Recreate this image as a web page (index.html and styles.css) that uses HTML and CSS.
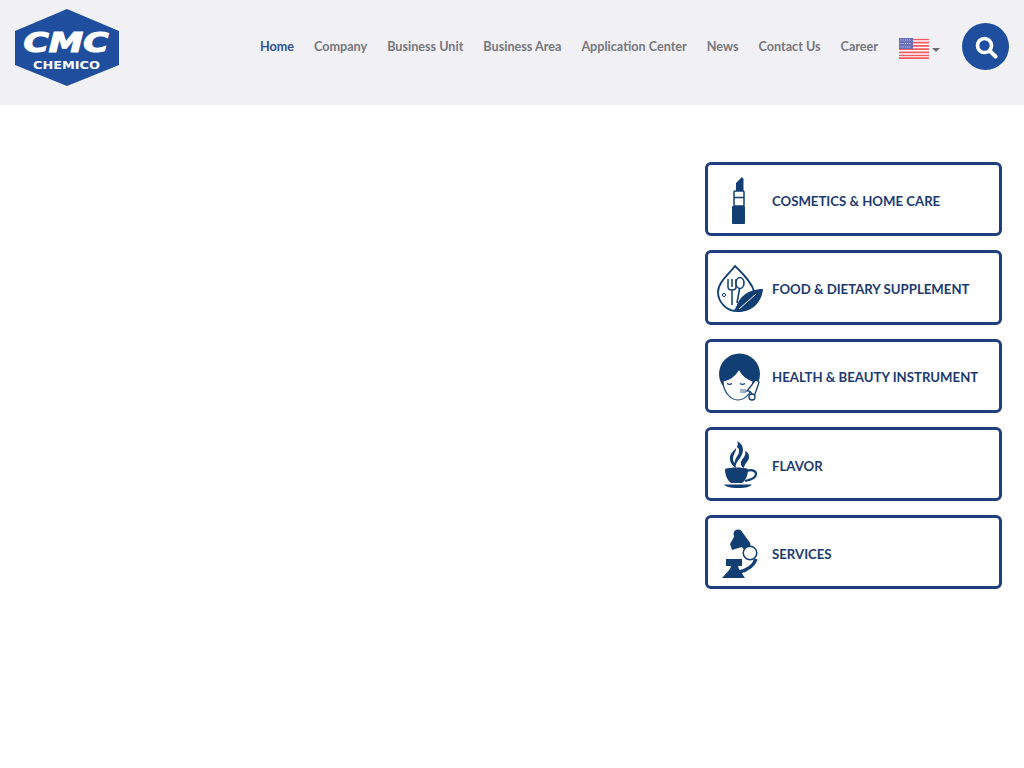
FILE: index.html
```html
<!DOCTYPE html>
<html lang="en">
<head>
    <meta charset="UTF-8">
    <meta name="viewport" content="width=device-width, initial-scale=1.0">
    <title>CMC Chemico</title>
    <link rel="stylesheet" href="styles.css">
</head>
<body>
    <header class="site-header">
        <a class="logo" href="#">
            <svg width="104" height="77" viewBox="0 0 104 77">
                <polygon points="52,0 104,22 104,56 52,77 0,56 0,22" fill="#1f4e9e"/>
                <text class="logo-mark" x="51" y="43" text-anchor="middle" textLength="85" lengthAdjust="spacingAndGlyphs">CMC</text>
                <text class="logo-name" x="51.500" y="60" text-anchor="middle" textLength="67" lengthAdjust="spacingAndGlyphs">CHEMICO</text>
            </svg>
        </a>
        <nav class="main-nav">
            <a class="active" href="#">Home</a>
            <a href="#">Company</a>
            <a href="#">Business Unit</a>
            <a href="#">Business Area</a>
            <a href="#">Application Center</a>
            <a href="#">News</a>
            <a href="#">Contact Us</a>
            <a href="#">Career</a>
        </nav>
        <a class="lang" href="#">
            <svg width="30" height="21" viewBox="0 0 30 21">
                <rect width="30" height="21" fill="#fff"/>
                <path d="M0 1.500h30M0 4.700h30M0 7.900h30M0 11.100h30M0 14.300h30M0 17.500h30M0 20.200h30" stroke="#ee5a64" stroke-width="1.700"/>
                <rect width="14" height="11" fill="#6a6fb8"/>
                <path d="M1.500 2h11M1.500 5.500h11M1.500 9h11" stroke="#d5d7f0" stroke-width="1" stroke-dasharray="1 1.200"/>
            </svg>
            <span class="caret"></span>
        </a>
        <a class="search-btn" href="#">
            <svg width="24" height="24" viewBox="0 0 24 24">
                <circle cx="10.500" cy="10.500" r="7" fill="none" stroke="#fff" stroke-width="3.600"/>
                <path d="M15.800 15.800 21.500 21.500" stroke="#fff" stroke-width="4" stroke-linecap="round"/>
            </svg>
        </a>
    </header>

    <main class="content">
        <aside class="side-links">
            <a class="side-card" href="#">
                <svg class="side-icon" viewBox="0 0 50 62">
                    <path d="M22 23V15l6-6 1.500 2V23z" fill="#123f73"/>
                    <rect x="20" y="23" width="10" height="15" rx="1" fill="#fff" stroke="#123f73" stroke-width="1.500"/>
                    <path d="M20 29.500h10" stroke="#123f73" stroke-width="1.500"/>
                    <rect x="18" y="38" width="13" height="18" rx="1" fill="#123f73"/>
                </svg>
                <span>COSMETICS &amp; HOME CARE</span>
            </a>
            <a class="side-card" href="#">
                <svg class="side-icon" viewBox="0 0 50 62">
                    <path d="M21 10C15 18 4 26 4 36c0 10 8 18 17 19 4-8 8-15 19-20-3-10-12-18-19-25z" fill="#fff" stroke="#123f73" stroke-width="1.800"/>
                    <path d="M14 23v8c0 2 2 3 4 3v15M18 23v8M22 23v8c0 2-2 3-4 3" fill="none" stroke="#123f73" stroke-width="1.500"/>
                    <ellipse cx="26" cy="27" rx="4" ry="5.500" fill="#fff" stroke="#123f73" stroke-width="1.600"/>
                    <path d="M25.500 33 23 47" stroke="#123f73" stroke-width="1.600"/>
                    <circle cx="10" cy="39" r="1.600" fill="none" stroke="#123f73"/>
                    <path d="M22 56C22 42 34 33 49 33c-1 13-11 24-27 23z" fill="#123f73"/>
                    <path d="M25 53 42 38" stroke="#fff" stroke-width="1"/>
                </svg>
                <span>FOOD &amp; DIETARY SUPPLEMENT</span>
            </a>
            <a class="side-card" href="#">
                <svg class="side-icon" viewBox="0 0 50 62">
                    <circle cx="25.500" cy="29" r="20.500" fill="#123f73"/>
                    <path d="M9 36c6-1 12-5 16-12 3 6 8 10 14 12 0 10-7 19-15 19S9 46 9 36z" fill="#fff" stroke="#123f73" stroke-width="1.200"/>
                    <path d="M13 38.500c1.500 1 3.500 1 5 0M26 38.500c1.500 1 3.500 1 5 0" fill="none" stroke="#123f73" stroke-width="1.200"/>
                    <path d="M27 44v4M29 44v4M31 44v4" stroke="#123f73" stroke-width=".8"/>
                    <path d="M33 46c3-1 4 1 5 3s3 2 3 0c1-3 3-8 4-12l-3-3c-3 5-6 8-9 12z" fill="#fff" stroke="#123f73" stroke-width="1.300"/>
                    <circle cx="38" cy="52" r="3" fill="#fff" stroke="#123f73" stroke-width="1.300"/>
                </svg>
                <span>HEALTH &amp; BEAUTY INSTRUMENT</span>
            </a>
            <a class="side-card" href="#">
                <svg class="side-icon" viewBox="0 0 50 62">
                    <path d="M23 8c4 7-8 10-7 18 0 4 3 7 6 9-2-6 7-10 7-18 0-4-2-7-6-9z" fill="#123f73"/>
                    <path d="M22 14c1 4-3 7-3 12 0 2 1 3 2 4-1-5 5-8 4-13 0-1-1-3-3-3z" fill="#fff"/>
                    <path d="M31 18c2 6-5 8-4 13 0 2 1 3 3 4 0-4 5-7 5-11 0-3-1-5-4-6z" fill="#123f73"/>
                    <path d="M11 36c5-2 18-2 23 0 0 6-2 11-6 14H17c-4-3-6-8-6-14z" fill="#123f73"/>
                    <path d="M33 38c5-2 9 0 9 3 0 4-6 6-11 7" fill="none" stroke="#123f73" stroke-width="2.200"/>
                    <path d="M10 51.500h28c-2 2-5 3.500-14 3.500s-12-1.500-14-3.500z" fill="#123f73"/>
                </svg>
                <span>FLAVOR</span>
            </a>
            <a class="side-card" href="#">
                <svg class="side-icon" viewBox="0 0 50 62">
                    <path d="M8 57H31L25 48 24 45H28V38H12V45H17L16 48z" fill="#123f73"/>
                    <path d="M21 14l-5 9 2 6 13-4z" fill="#123f73"/>
                    <path d="M24 13 32 24" stroke="#123f73" stroke-width="9" stroke-linecap="round"/>
                    <path d="M42 38c-2 6-8 11-17 13" fill="none" stroke="#123f73" stroke-width="3.500"/>
                    <circle cx="36" cy="32" r="6.800" fill="#fff" stroke="#123f73" stroke-width="1.500"/>
                </svg>
                <span>SERVICES</span>
            </a>
        </aside>
    </main>
</body>
</html>
```

FILE: styles.css
```css
body {
    margin: 0;
    font-family: Lato, "Noto Sans", sans-serif;
    background-color: #fff;
}

a {
    text-decoration: none;
}

.site-header {
    display: flex;
    align-items: center;
    height: 105px;
    padding: 0 15px 12px;
    background-color: #f0f0f5;
    box-sizing: border-box;
}

.logo {
    display: flex;
    margin-top: 2px;
}

.logo-mark {
    font-family: "DejaVu Sans", sans-serif;
    font-size: 27px;
    font-weight: bold;
    font-style: italic;
    fill: #fff;
    stroke: #fff;
    stroke-width: 1.2px;
}

.logo-name {
    font-family: "DejaVu Sans", sans-serif;
    font-size: 10.5px;
    font-weight: bold;
    fill: #fff;
}

.main-nav {
    display: flex;
    gap: 20px;
    margin-left: auto;
}

.main-nav a {
    font-size: 12.62px;
    font-weight: 700;
    color: #77777c;
}

.main-nav a.active {
    color: #2a5298;
}

.lang {
    display: flex;
    align-items: center;
    gap: 3px;
    margin: 4px 0 0 21px;
}

.caret {
    margin-top: 3px;
    border-top: 4px solid #6e6e73;
    border-left: 4px solid transparent;
    border-right: 4px solid transparent;
}

.search-btn {
    display: flex;
    align-items: center;
    justify-content: center;
    width: 47px;
    height: 47px;
    margin-left: 22px;
    border-radius: 50%;
    background-color: #1f4e9e;
}

.content {
    display: flex;
    justify-content: flex-end;
    padding: 57px 22px 0 0;
}

.side-links {
    display: flex;
    flex-direction: column;
    gap: 14px;
    width: 297px;
}

.side-card {
    display: flex;
    align-items: center;
    gap: 8px;
    height: 74.3px;
    padding-left: 6px;
    border: 3px solid #1d3f7f;
    border-radius: 6px;
    box-sizing: border-box;
    font-size: 13.2px;
    font-weight: 700;
    color: #1c3a72;
}

.side-card span {
    margin-top: 3px;
}

.side-icon {
    width: 50px;
    height: 62px;
    flex-shrink: 0;
}
```
